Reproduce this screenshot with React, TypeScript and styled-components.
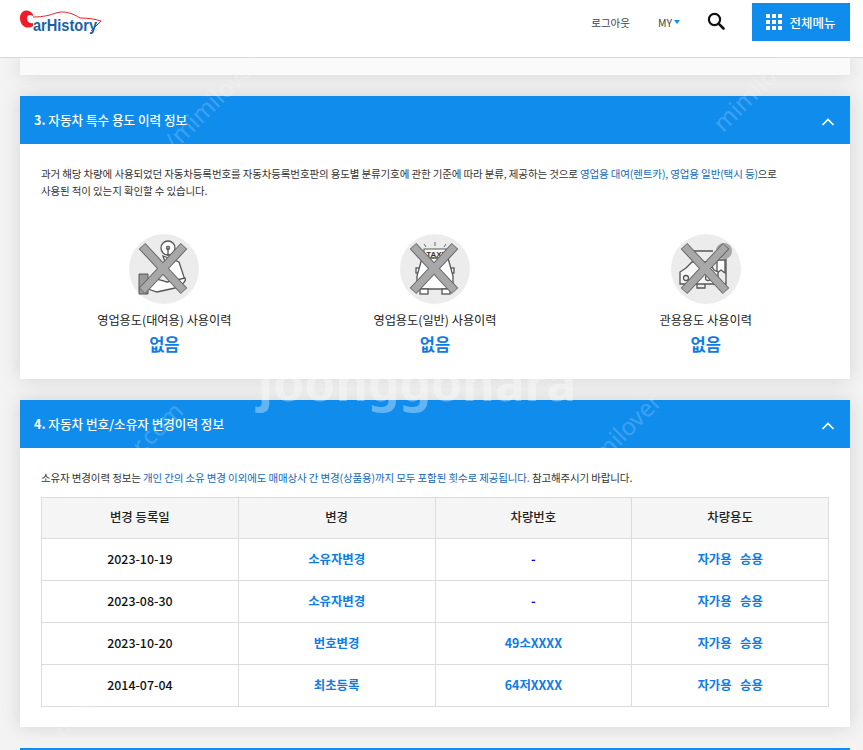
import React from 'react';
import styled, { createGlobalStyle } from 'styled-components';

const GlobalStyle = createGlobalStyle`
  html, body {
    margin: 0;
    padding: 0;
    background: #f3f3f3;
    font-family: "Noto Sans CJK KR", "Noto Sans", sans-serif;
    color: #222;
    overflow: hidden;
  }
  * { box-sizing: border-box; }
`;

const Page = styled.div`
  position: relative;
  width: 863px;
  height: 750px;
  overflow: hidden;
`;

const Header = styled.header`
  position: relative;
  z-index: 2;
  display: flex;
  align-items: flex-start;
  height: 58px;
  padding: 3px 13px 0 20px;
  background: #fff;
  border-bottom: 1px solid #d8d8d8;
`;

const Logo = styled.svg`
  width: 84px;
  height: 30px;
  margin-top: 5px;
`;

const Nav = styled.nav`
  display: flex;
  align-items: center;
  height: 38px;
  margin-left: auto;
`;

const NavLink = styled.a`
  font-size: 10.5px;
  color: #444;
  margin-right: 28px;
`;

const MyLink = styled.a`
  display: flex;
  align-items: center;
  gap: 2px;
  font-size: 10.5px;
  color: #444;
  margin-right: 27px;
`;

const Caret = styled.span`
  width: 0;
  height: 0;
  border-left: 3.5px solid transparent;
  border-right: 3.5px solid transparent;
  border-top: 4px solid #0f8cec;
`;

const SearchButton = styled.svg`
  width: 18px;
  height: 18px;
  margin: 0 27px 3px 0;
`;

const MenuButton = styled.button`
  display: flex;
  align-items: center;
  justify-content: center;
  gap: 7px;
  width: 98px;
  height: 38px;
  border: 0;
  padding: 0;
  background: #0f8cec;
  color: #fff;
  font-family: inherit;
  font-size: 12.5px;
  font-weight: 500;
`;

const Grid9 = styled.span`
  display: grid;
  grid-template-columns: repeat(3, 4px);
  grid-auto-rows: 4px;
  gap: 2px;

  i {
    display: block;
    background: #fff;
  }
`;

const Content = styled.main`
  display: flex;
  flex-direction: column;
  gap: 21px;
  width: 830px;
  margin-left: 20px;
`;

const Stub = styled.div`
  height: 17px;
  background: #fafafa;
  box-shadow: 0 0 18px rgba(0, 0, 0, 0.13);
`;

const Card = styled.section`
  background: #fff;
  box-shadow: 0 0 18px rgba(0, 0, 0, 0.13);
`;

const CardHeader = styled.div`
  display: flex;
  align-items: center;
  justify-content: space-between;
  height: 48px;
  padding: 0 15px 2px 14px;
  background: #0f8cec;
  color: #fff;
  font-size: 12.6px;
  font-weight: 500;

  b { font-weight: 700; }
`;

const Chevron = styled.svg`
  width: 14px;
  height: 10px;
  margin-top: 5px;
`;

const CardBody = styled.div`
  padding: 21px 21px 19px;
`;

const Notice = styled.p`
  margin: 0;
  font-size: 10.5px;
  letter-spacing: -0.13px;
  line-height: 17px;
  color: #333;

  em {
    font-style: normal;
    color: #1467b8;
  }
`;

const UsageRow = styled.div`
  display: grid;
  grid-template-columns: repeat(3, 1fr);
  margin: 35px -12px 3px;
`;

const UsageItem = styled.div`
  display: flex;
  flex-direction: column;
  align-items: center;
`;

const UsageIcon = styled.svg`
  width: 70px;
  height: 70px;
`;

const UsageLabel = styled.div`
  margin-top: 7px;
  font-size: 12.2px;
  line-height: 18px;
  color: #222;
`;

const UsageValue = styled.div`
  margin-top: 2px;
  font-size: 16.5px;
  line-height: 26px;
  font-weight: 700;
  color: #0f7ce6;
`;

const OwnerNotice = styled(Notice)`
  margin-bottom: 10px;
  line-height: 17.5px;
`;

const Table = styled.table`
  width: 100%;
  margin-bottom: 1px;
  table-layout: fixed;
  border-collapse: collapse;
  border: 1px solid #dcdcdc;
  font-size: 12.4px;
`;

const Th = styled.th`
  height: 41px;
  padding: 0 0 1px;
  border: 1px solid #dcdcdc;
  background: #f5f5f5;
  color: #222;
  font-weight: 500;
`;

const Td = styled.td<{ $tone?: 'dark' | 'blue' | 'navy' }>`
  height: 42px;
  padding: 0 0 1px;
  border: 1px solid #dcdcdc;
  text-align: center;
  font-weight: ${p => (p.$tone ? 700 : 500)};
  color: ${p => (p.$tone === 'blue' ? '#0f7ce6' : p.$tone === 'navy' ? '#0000ff' : '#111')};
`;

const NextCardEdge = styled.div`
  height: 10px;
  background: #0f8cec;
`;

const Watermarks = styled.div`
  position: absolute;
  inset: 0;
  z-index: 3;
  pointer-events: none;
  overflow: hidden;
`;

const Mark = styled.span<{ $x: number; $y: number; $size: number; $flat?: boolean }>`
  position: absolute;
  left: ${p => p.$x}px;
  top: ${p => p.$y}px;
  font-family: "Noto Sans", sans-serif;
  font-size: ${p => p.$size}px;
  line-height: ${p => (p.$flat ? '40px' : 'normal')};
  font-weight: ${p => (p.$flat ? 700 : 400)};
  white-space: nowrap;
  color: rgba(255, 255, 255, ${p => (p.$flat ? 0.35 : 0.2)});
  transform: ${p => (p.$flat ? 'none' : 'rotate(-45deg)')};
`;

const CrossOut = () => (
  <g fill="none">
    <path d="M13 12 L55 57 M55 12 L13 57" stroke="#666" strokeWidth="9" />
    <path d="M13.5 12.5 L54.5 56.5 M54.5 12.5 L13.5 56.5" stroke="#a8a8a8" strokeWidth="7" />
  </g>
);

const RentalIcon = () => (
  <UsageIcon viewBox="0 0 70 70">
    <circle cx="35" cy="35" r="35" fill="#ececec" />
    <g fill="none" stroke="#555" strokeWidth="1.3">
      <circle cx="39" cy="14" r="7" fill="#fff" />
      <circle cx="39" cy="14" r="1.5" />
      <path d="M39 14 V22 M34 22 L50 28 L56 46 L42 46 Z" fill="#fff" />
      <path d="M16 48 C24 42 30 46 38 48 L56 44 C58 47 52 52 46 54 L28 58 L16 54" fill="#fff" />
    </g>
    <path d="M10 40 H19 V60 H10 Z" fill="#9a9a9a" stroke="#555" />
    <CrossOut />
  </UsageIcon>
);

const TaxiIcon = () => (
  <UsageIcon viewBox="0 0 70 70">
    <circle cx="35" cy="35" r="35" fill="#ececec" />
    <g fill="none" stroke="#666" strokeWidth="1">
      <path d="M35 8 V12 M24 10 L26 13 M46 10 L44 13" />
    </g>
    <rect x="24" y="15" width="22" height="9" fill="#fff" stroke="#555" />
    <text x="35" y="23" textAnchor="middle" fontSize="8" fontWeight="700" fontFamily="Liberation Sans, sans-serif" fill="#333">TAXI</text>
    <g fill="#fff" stroke="#555" strokeWidth="1.3">
      <rect x="16" y="34" width="5" height="5" />
      <rect x="49" y="34" width="5" height="5" />
      <path d="M22 24 H48 L53 42 V55 H17 V42 Z" />
      <rect x="20" y="55" width="8" height="5" />
      <rect x="42" y="55" width="8" height="5" />
    </g>
    <CrossOut />
  </UsageIcon>
);

const OfficialIcon = () => (
  <UsageIcon viewBox="0 0 70 70">
    <circle cx="35" cy="35" r="35" fill="#ececec" />
    <g fill="none" stroke="#555" strokeWidth="1.3">
      <path d="M18 17 H42 M22 17 V28 M55 24 V50 H42" />
      <path d="M46 26 V39 L50 36 L54 39 V26 Z" fill="#fff" />
      <path d="M15 34 L21 28 H38 L43 36 L47 38 V50 H9 V38 Z" fill="#f6f6f6" />
      <circle cx="15" cy="44" r="2.5" />
      <circle cx="37" cy="44" r="2.5" />
      <path d="M26 50 V54 H34 V50" />
    </g>
    <circle cx="53" cy="17" r="8" fill="#a8a8a8" />
    <CrossOut />
  </UsageIcon>
);

const usages = [
  { label: '영업용도(대여용) 사용이력', Icon: RentalIcon },
  { label: '영업용도(일반) 사용이력', Icon: TaxiIcon },
  { label: '관용용도 사용이력', Icon: OfficialIcon },
];

const history = [
  { date: '2023-10-19', change: '소유자변경', plate: '-' },
  { date: '2023-08-30', change: '소유자변경', plate: '-' },
  { date: '2023-10-20', change: '번호변경', plate: '49소XXXX' },
  { date: '2014-07-04', change: '최초등록', plate: '64저XXXX' },
];

const UpChevron = () => (
  <Chevron viewBox="0 0 14 10">
    <path d="M1.5 8 L7 2.5 L12.5 8" fill="none" stroke="#fff" strokeWidth="1.7" />
  </Chevron>
);

const App = () => {
  return (
    <Page>
      <GlobalStyle />
      <Header>
        <Logo viewBox="0 0 84 30">
          <path d="M13 6.5 C9 0 0 2 0 10 C0 18 7 22 13 18 L13 15 C9 16 7 13 7 10 C7 7 10 6 13 8 Z" fill="#ee1c25" />
          <path d="M13 9 C24 9 30 7 36 5 C44 2 54 6 60 10 C68 10 75 11 81 13 L71 23" fill="none" stroke="#e8232a" strokeWidth="1" />
          <text x="13" y="23" fontFamily="Liberation Sans, sans-serif" fontWeight="700" fontSize="16" fill="#1b5fa6" textLength="64" lengthAdjust="spacingAndGlyphs">arHistory</text>
        </Logo>
        <Nav>
          <NavLink>로그아웃</NavLink>
          <MyLink>
            MY
            <Caret />
          </MyLink>
          <SearchButton viewBox="0 0 18 18">
            <circle cx="7.5" cy="7.5" r="5.6" fill="none" stroke="#111" strokeWidth="2.2" />
            <path d="M11.6 11.6 L16.5 16.5" stroke="#111" strokeWidth="2.6" strokeLinecap="round" />
          </SearchButton>
          <MenuButton>
            <Grid9>
              {Array.from({ length: 9 }).map((_, i) => (
                <i key={i} />
              ))}
            </Grid9>
            전체메뉴
          </MenuButton>
        </Nav>
      </Header>

      <Content>
        <Stub />

        <Card>
          <CardHeader>
            <span>
              <b>3.</b> 자동차 특수 용도 이력 정보
            </span>
            <UpChevron />
          </CardHeader>
          <CardBody>
            <Notice>
              과거 해당 차량에 사용되었던 자동차등록번호를 자동차등록번호판의 용도별 분류기호에 관한 기준에 따라 분류, 제공하는 것으로{' '}
              <em>영업용 대여(렌트카), 영업용 일반(택시 등)</em>으로
              <br />
              사용된 적이 있는지 확인할 수 있습니다.
            </Notice>
            <UsageRow>
              {usages.map(({ label, Icon }) => (
                <UsageItem key={label}>
                  <Icon />
                  <UsageLabel>{label}</UsageLabel>
                  <UsageValue>없음</UsageValue>
                </UsageItem>
              ))}
            </UsageRow>
          </CardBody>
        </Card>

        <Card>
          <CardHeader>
            <span>
              <b>4.</b> 자동차 번호/소유자 변경이력 정보
            </span>
            <UpChevron />
          </CardHeader>
          <CardBody>
            <OwnerNotice>
              소유자 변경이력 정보는 <em>개인 간의 소유 변경 이외에도 매매상사 간 변경(상품용)까지 모두 포함된 횟수로 제공됩니다.</em> 참고해주시기 바랍니다.
            </OwnerNotice>
            <Table>
              <thead>
                <tr>
                  <Th>변경 등록일</Th>
                  <Th>변경</Th>
                  <Th>차량번호</Th>
                  <Th>차량용도</Th>
                </tr>
              </thead>
              <tbody>
                {history.map((row, index) => (
                  <tr key={index}>
                    <Td>{row.date}</Td>
                    <Td $tone="blue">{row.change}</Td>
                    <Td $tone={row.plate === '-' ? 'navy' : 'blue'}>{row.plate}</Td>
                    <Td $tone="blue">자가용&nbsp;&nbsp; 승용</Td>
                  </tr>
                ))}
              </tbody>
            </Table>
          </CardBody>
        </Card>

        <NextCardEdge />
      </Content>

      <Watermarks>
        <Mark $x={150} $y={85} $size={24}>/mimilover</Mark>
        <Mark $x={258} $y={362} $size={50} $flat>joonggonara</Mark>
        <Mark $x={80} $y={430} $size={24}>naver.com</Mark>
        <Mark $x={560} $y={420} $size={24}>mimilover</Mark>
        <Mark $x={700} $y={70} $size={24}>mimilover</Mark>
        <Mark $x={50} $y={700} $size={20}>naver</Mark>
      </Watermarks>
    </Page>
  );
};

export default App;
